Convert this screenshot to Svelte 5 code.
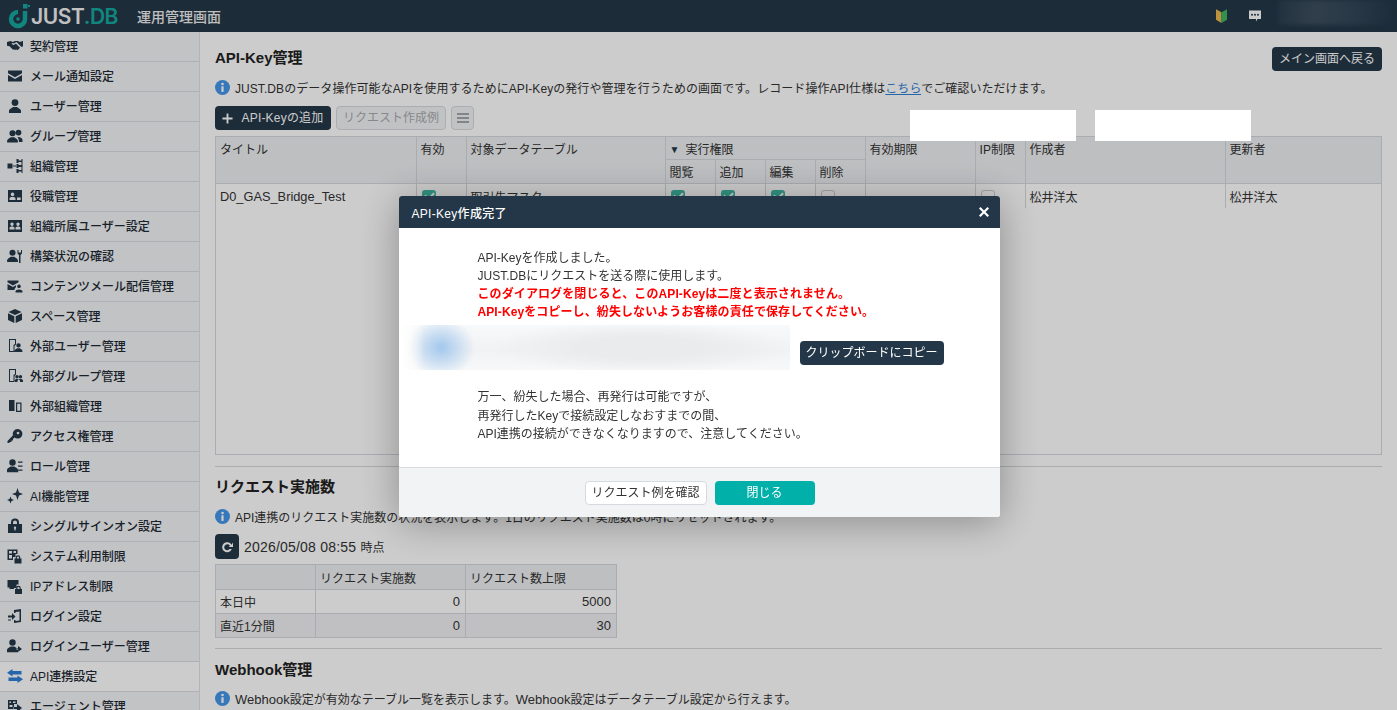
<script>
  const c = (x, y, r) => `M${x - r} ${y}a${r} ${r} 0 1 0 ${2 * r} 0a${r} ${r} 0 1 0 ${-2 * r} 0z`;
  const person = (x, y, s = 1) =>
    c(x, y + 3.6 * s, 3.4 * s) +
    `M${x - 6 * s} ${y + 14 * s}v${-2 * s}c0 ${-2 * s} ${3 * s} ${-3 * s} ${4 * s} ${-4 * s}h${4 * s}c${1 * s} ${1 * s} ${4 * s} ${2 * s} ${4 * s} ${4 * s}v${2 * s}z`;
  const lock = (x, y, s = 1) =>
    `M${x} ${y + 3 * s}h${7 * s}v${5 * s}h${-7 * s}z` + `M${x + 1.2 * s} ${y + 3 * s}v${-1 * s}a${2.3 * s} ${2.3 * s} 0 0 1 ${4.6 * s} 0v${1 * s}h${-1.2 * s}v${-1 * s}a${1.1 * s} ${1.1 * s} 0 0 0 ${-2.2 * s} 0v${1 * s}z`;
  const nav = [
    ['契約管理', 'M0 4l3.500-1 2.500 1 2-1h3l1.500 1 3.500-1v5.500l-1.800.3-1.200-1.300-3.500-3.500-2.500 1.500-1.500-.5-1 1 2 1 2.500-1.300 4 4-2.500 2.500-1.500-1-1 1-1-1-1 .5-3.500-3.500-2.500-.5z'],
    ['メール通知設定', 'M1 2.500h14v2.700L8 9.200 1 5.200zM1 7l7 4 7-4v6.500H1z'],
    ['ユーザー管理', person(8, 1)],
    ['グループ管理', person(5.500, 2, .9) + c(11.500, 4.600, 2.900) + 'M11 9c2 0 4.500 1 4.500 3v2h-3.500c0-2-.5-3.500-1.500-4.500z'],
    ['組織管理', 'M.5 5.500h5v5h-5zM6 7.500h3v1H6zM9.500 1h2v1.500h3V1h1v14h-1v-1.500h-3V15h-2v-4h2v1h3V9h-3v1h-2V6h2v1h3V4h-3v1h-2z'],
    ['役職管理', 'M1 2h14v12H1zM5.500 4.500a1.800 1.800 0 1 0 .01 0zM2.500 12h6V10.500c0-1-1.500-1.800-3-1.800s-3 .8-3 1.800zM10 9.500v2.500h3.700V9.500z'],
    ['組織所属ユーザー設定', 'M1 2h14v12H1zM5 4.500a1.700 1.700 0 1 0 .01 0zM11 4.500a1.700 1.700 0 1 0 .01 0zM2.500 11.500h5V10c0-1-1.200-1.500-2.500-1.500S2.500 9 2.500 10zM8.500 11.500h5V10c0-1-1.200-1.500-2.500-1.500S8.500 9 8.500 10z'],
    ['構築状況の確認', person(5.500, 1.500, .9) + 'M10.500 2h1v2.500h2.500V2h1v3.500L13.500 7v8h-1.500V7l-1.500-1.500z'],
    ['コンテンツメール配信管理', 'M.5 2.500h11v1.800L6 7.500.5 4.300zM.5 6l5.500 3 3-1.700v2c-1 .7-1.500 1.500-1.500 2.700H.5zM12 6.500a1.800 1.800 0 1 0 .01 0zM8.500 14.500h7v-1c0-1.200-1.700-2-3.500-2s-3.500.8-3.500 2z'],
    ['スペース管理', 'M8 1l6.500 3L8 7 1.500 4zM1 5.300l6.300 2.900V15L1 12zM15 5.300L8.700 8.200V15L15 12z'],
    ['外部ユーザー管理', 'M2 1h7v5.500L7.500 8v6H2zM3 2v11h3.500V7L8 6V2z' + person(11.500, 5, .65)],
    ['外部グループ管理', 'M2 1h7v5.500L7.500 8v6H2zM3 2v11h3.500V7L8 6V2z' + person(10, 7, .5) + person(13.500, 7, .5)],
    ['外部組織管理', 'M2 2h5.500v11H2zM9 4.500h5.500V14H9zM10.200 5.700v7.100h3.100V5.700z'],
    ['アクセス権管理', 'M10.500 1a4.800 4.800 0 1 1-3 8.500L6 11v1.500H4.500V14H3l-1 1H.5v-2l5.500-5.800A4.800 4.800 0 0 1 10.500 1zM11 3.700a1.300 1.300 0 1 0 .01 0z'],
    ['ロール管理', person(5.500, 1, .95) + 'M11 3.500h4.500v1.200H11zM11 7.500h4.500v1.200H11zM11 11.500h4.500v1.200H11z'],
    ['AI機能管理', 'M10.500 0l1.500 4.500 4 1.500-4 1.500-1.500 4.500L9 7.500 5 6l4-1.500zM3.500 8.500l1 2.500 2.500 1-2.500 1-1 2.500-1-2.500L0 12l2.500-1z'],
    ['シングルサインオン設定', 'M1 6h14v9H1zM8 8.500a1.300 1.300 0 0 0-.6 2.400v1.600h1.200v-1.600A1.300 1.300 0 0 0 8 8.500zM4 6V4.500a4 4 0 0 1 8 0V6h-2V4.500a2 2 0 0 0-4 0V6z'],
    ['システム利用制限', 'M.5 1.500h10v4.500H8.500v3H6v3H.5zM2 3v2.500h3V3zM6.500 3v2h2.500V3zM2 7v3.500h3V7z' + lock(7.500, 7.500, 1)],
    ['IPアドレス制限', 'M.5 2h11v4.500H9.500v3.500H7v1H2.500v-1.500h2V9.500h-4z' + lock(8, 8, 1)],
    ['ログイン設定', 'M7 2l7-1v13l-7 1v-3h1.500v1l4-.5v-9l-4 .5V5H7zM1 7.500h4V5l3.500 3.500L5 12V9.500H1zM1 11.500h3v1H1z'],
    ['ログインユーザー管理', person(5.500, 1, .95) + 'M11 8v2.300h-1.500v1.400H11V14l4-3z'],
    ['API連携設定', 'M5.500 1v2h9v3.500h-9V8.500L0 4.700zM10.500 7.500v2h-9V13h9v2L16 11.200z', true],
    ['エージェント管理', 'M1 2h9v4H7v5H1zM2.500 3.500v1.500h1.500V3.500zM6 3.500v1.500h2.500V3.500zM2.500 7v2h3V7zM10 6v3H6.500v2H10v3l5-4z']
  ];
  const cols = ['タイトル', '有効', '対象データテーブル'];
</script>

<div class="page">
  <header class="topbar">
    <div class="logo">
      <svg class="logo-mark" viewBox="0 0 22 25" aria-hidden="true"><path d="M10 8A7 7 0 1 0 17 15V7" fill="none" stroke="#16a89e" stroke-width="4.500" /><circle cx="10" cy="15" r="1.800" fill="#16a89e" /><rect x="15" y="0" width="4.500" height="4.500" fill="#16a89e" /><rect x="20" y="1" width="2" height="2" fill="#16a89e" /></svg>
      <span class="logo-text">JUST<span class="logo-dot">.</span><span class="logo-db">DB</span></span>
    </div>
    <span class="app-title">運用管理画面</span>
    <div class="top-right">
      <svg class="beginner" viewBox="0 0 12 15" aria-hidden="true"><path d="M0 0l6 3.500V15L0 11.500z" fill="#e9b84f" /><path d="M12 0L6 3.500V15l6-3.500z" fill="#3fb660" /></svg>
      <svg class="chat" viewBox="0 0 14 14" aria-hidden="true"><path d="M1 1.500h12v8.500H9.500L8 12.500V10H1z" fill="#fff" /><circle cx="4" cy="5.800" r="1" fill="#243748" /><circle cx="7" cy="5.800" r="1" fill="#243748" /><circle cx="10" cy="5.800" r="1" fill="#243748" /></svg>
      <div class="account"></div>
    </div>
  </header>

  <div class="columns">
    <nav class="sidebar">
      {#each nav as [label, d, active]}
        <div class="nav-item" class:active>
          <svg class="nav-icon" viewBox="0 0 16 16" aria-hidden="true"><path {d} fill-rule="evenodd" /></svg>
          <span>{label}</span>
        </div>
      {/each}
    </nav>

    <main class="content">
      <div class="title-row">
        <h2>API-Key管理</h2>
        <button class="btn dark back">メイン画面へ戻る</button>
      </div>
      <p class="info first">
        <svg class="info-icon" viewBox="0 0 16 16" aria-hidden="true"><circle cx="8" cy="8" r="8" /><rect x="6.800" y="6.700" width="2.400" height="6" fill="#fff" /><circle cx="8" cy="4.300" r="1.400" fill="#fff" /></svg>
        <span>JUST.DBのデータ操作可能なAPIを使用するためにAPI-Keyの発行や管理を行うための画面です。レコード操作API仕様は<a href="#top">こちら</a>でご確認いただけます。</span>
      </p>
      <div class="toolbar">
        <button class="btn dark add"><svg viewBox="0 0 12 12" aria-hidden="true"><path d="M5 .5h2V5h4.500v2H7v4.500H5V7H.5V5H5z" fill="#fff" /></svg>API-Keyの追加</button>
        <button class="btn disabled">リクエスト作成例</button>
        <button class="btn disabled menu" aria-label="menu"><svg viewBox="0 0 12 10" aria-hidden="true"><path d="M0 0h12v2H0zM0 4h12v2H0zM0 8h12v2H0z" fill="#a3a6ab" /></svg></button>
      </div>

      <div class="grid-box">
        <table class="keys">
          <colgroup>
            <col style="width:200px" /><col style="width:50px" /><col style="width:199px" />
            <col style="width:50px" /><col style="width:50px" /><col style="width:50px" /><col style="width:50px" />
            <col style="width:110px" /><col style="width:50px" /><col style="width:200px" /><col />
          </colgroup>
          <thead>
            <tr>
              {#each cols as t}<th rowspan="2">{t}</th>{/each}
              <th colspan="4"><span class="tri">▼</span>実行権限</th>
              <th rowspan="2">有効期限</th>
              <th rowspan="2">IP制限</th>
              <th rowspan="2">作成者</th>
              <th rowspan="2" class="last">更新者</th>
            </tr>
            <tr><th>閲覧</th><th>追加</th><th>編集</th><th>削除</th></tr>
          </thead>
          <tbody>
            <tr>
              <td class="latin">D0_GAS_Bridge_Test</td>
              <td><span class="check on"></span></td>
              <td>取引先マスタ</td>
              <td><span class="check on"></span></td>
              <td><span class="check on"></span></td>
              <td><span class="check on"></span></td>
              <td><span class="check"></span></td>
              <td></td>
              <td><span class="check"></span></td>
              <td>松井洋太</td>
              <td class="last">松井洋太</td>
            </tr>
          </tbody>
        </table>
      </div>

      <hr />
      <h2 class="sub">リクエスト実施数</h2>
      <p class="info">
        <svg class="info-icon" viewBox="0 0 16 16" aria-hidden="true"><circle cx="8" cy="8" r="8" /><rect x="6.800" y="6.700" width="2.400" height="6" fill="#fff" /><circle cx="8" cy="4.300" r="1.400" fill="#fff" /></svg>
        <span>API連携のリクエスト実施数の状況を表示します。1日のリクエスト実施数は0時にリセットされます。</span>
      </p>
      <div class="refresh-row">
        <button class="btn dark refresh" aria-label="refresh"><svg viewBox="0 0 12 12" aria-hidden="true"><path d="M10.500 3.800A5 5 0 1 0 10.800 8H8.600A3 3 0 1 1 9 5.100L7.500 6H12V1.500z" fill="#fff" /></svg></button>
        <span><span class="date">2026/05/08 08:55</span> 時点</span>
      </div>
      <table class="usage">
        <colgroup><col style="width:100px" /><col style="width:150px" /><col style="width:151px" /></colgroup>
        <thead><tr><th></th><th>リクエスト実施数</th><th>リクエスト数上限</th></tr></thead>
        <tbody>
          <tr><td>本日中</td><td class="num">0</td><td class="num">5000</td></tr>
          <tr class="stripe"><td>直近1分間</td><td class="num">0</td><td class="num">30</td></tr>
        </tbody>
      </table>
      <hr class="hr2" />
      <h2 class="sub webhook">Webhook管理</h2>
      <p class="info">
        <svg class="info-icon" viewBox="0 0 16 16" aria-hidden="true"><circle cx="8" cy="8" r="8" /><rect x="6.800" y="6.700" width="2.400" height="6" fill="#fff" /><circle cx="8" cy="4.300" r="1.400" fill="#fff" /></svg>
        <span><span class="lat">Webhook</span>設定が有効なテーブル一覧を表示します。<span class="lat">Webhook</span>設定はデータテーブル設定から行えます。</span>
      </p>
    </main>
  </div>

  <div class="overlay">
    <section class="modal">
      <div class="modal-head">
        <span>API-Key作成完了</span>
        <svg viewBox="0 0 10 10" aria-hidden="true"><path d="M1.500 0L5 3.500 8.500 0 10 1.500 6.500 5 10 8.500 8.500 10 5 6.500 1.500 10 0 8.500 3.500 5 0 1.500z" fill="#fff" /></svg>
      </div>
      <div class="modal-body">
        <div class="msg">
          <p>API-Keyを作成しました。</p>
          <p>JUST.DBにリクエストを送る際に使用します。</p>
          <p class="warn">このダイアログを閉じると、このAPI-Keyは二度と表示されません。</p>
          <p class="warn">API-Keyをコピーし、紛失しないようお客様の責任で保存してください。</p>
        </div>
        <div class="key-row">
          <div class="key-blur"></div>
          <button class="btn dark copy">クリップボードにコピー</button>
        </div>
        <div class="msg after">
          <p>万一、紛失した場合、再発行は可能ですが、</p>
          <p>再発行したKeyで接続設定しなおすまでの間、</p>
          <p>API連携の接続ができなくなりますので、注意してください。</p>
        </div>
      </div>
      <div class="modal-foot">
        <button class="btn outline">リクエスト例を確認</button>
        <button class="btn teal">閉じる</button>
      </div>
    </section>
  </div>

  <div class="mask m1"></div>
  <div class="mask m2"></div>
</div>

<style>
  :global(body) {
    margin: 0;
    overflow: hidden;
    background: #fff;
    font-family: "Liberation Sans", "Noto Sans CJK JP", sans-serif;
    font-size: 12px;
    color: #333;
  }
  .page { height: 710px; overflow: hidden; display: flex; flex-direction: column; }
  .topbar {
    flex: none; height: 32px; background: #243748; color: #fff;
    display: flex; align-items: center; padding-left: 8px; box-sizing: border-box;
  }
  .logo { display: flex; align-items: center; width: 129px; }
  .logo-mark { width: 22px; height: 25px; margin-right: 1px; }
  .logo-text { font-family: "Inter", "Liberation Sans", sans-serif; font-size: 21px; font-weight: 600; letter-spacing: -0.45px; color: #f2f2f2; }
  .logo-dot, .logo-db { color: #16a89e; }
  .app-title { font-size: 14px; font-weight: 500; color: #eee; }
  .top-right { margin-left: auto; display: flex; align-items: center; height: 100%; }
  .beginner { width: 11px; height: 14px; margin-right: 21px; }
  .chat { width: 14px; height: 14px; margin-right: 16px; }
  .account { width: 119px; height: 25px; align-self: flex-start; background: linear-gradient(90deg, #2b3f50, #3d4f5e 30%, #34485a 60%, #243748); filter: blur(2px); }

  .columns { flex: 1; display: flex; min-height: 0; }
  .sidebar { flex: none; width: 199px; background: #f2f4f6; border-right: 1px solid #dfe2e6; overflow: hidden; }
  .nav-item {
    height: 30px; box-sizing: border-box; border-bottom: 1px solid #dadde2;
    display: flex; align-items: center; padding: 0 0 2px 7px; color: #1f2a35; font-weight: 500;
  }
  .nav-item span { margin-left: 7px; }
  .nav-item.active { background: #fff; }
  .nav-icon { width: 16px; height: 16px; flex: none; fill: #243748; }
  .nav-item.active .nav-icon { fill: #2f7fd6; }

  .content { flex: 1; min-width: 0; padding: 0 15px; box-sizing: border-box; overflow: hidden; }
  h2 { margin: 0; font-size: 15px; line-height: 20px; font-weight: 700; color: #222; }
  .title-row { display: flex; justify-content: space-between; align-items: flex-start; padding-top: 15px; height: 39px; box-sizing: border-box; }
  .title-row h2 { padding-top: 1px; }
  .btn {
    font: inherit; font-size: 12px; height: 24px; padding: 0; border-radius: 4px; border: 1px solid transparent;
    box-sizing: border-box; display: inline-flex; align-items: center; justify-content: center; line-height: 1;
  }
  .dark { background: #243748; color: #fff; }
  .back { width: 110px; }
  .info { margin: 0; height: 20px; display: flex; align-items: center; gap: 5px; color: #333; white-space: nowrap; }
  .info.first { letter-spacing: .065px; }
  .lat { font-size: 13px; }
  .info-icon { width: 15px; height: 15px; fill: #4596ea; flex: none; }
  .info a { color: #2f7fd6; }
  .title-row + .info { margin-top: 6px; }
  .toolbar { display: flex; gap: 5px; margin-top: 9px; height: 24px; }
  .add { width: 116px; letter-spacing: .2px; }
  .add svg { width: 11px; height: 11px; margin-right: 8px; }
  .disabled { background: #f2f3f5; color: #a8abb0; border-color: #d6d9dd; width: 110px; }
  .menu { width: 23px; }
  .menu svg { width: 12px; height: 10px; }

  .grid-box { margin-top: 6px; width: 1167px; height: 319px; box-sizing: border-box; border: 1px solid #d4d8de; overflow: hidden; }
  table { border-collapse: collapse; table-layout: fixed; }
  .keys { width: 1165px; }
  .keys th, .keys td, .usage th, .usage td { border: 1px solid #d4d8de; padding: 0 4px; font-weight: 400; text-align: left; white-space: nowrap; }
  .keys th { background: #edeff2; height: 22px; vertical-align: middle; }
  .keys thead tr:last-child th { height: 23px; }
  .keys th[rowspan] { vertical-align: top; padding-top: 3px; }
  .keys thead tr:first-child th { border-top: 0; }
  .keys th:first-child, .keys td:first-child { border-left: 0; }
  .keys .last { border-right: 0; }
  .keys td { height: 23px; border-bottom: 0; padding-top: 1px; }
  .latin { font-size: 12.800px; }
  .tri { font-size: 10px; margin-right: 6px; margin-left: 0; vertical-align: 1px; color: #243748; }
  .check { display: block; width: 14px; height: 14px; box-sizing: border-box; border-radius: 3px; border: 1px solid #c8ccd2; background: #fff; margin-left: 1px; }
  .check.on { border: 0; background: #3fb9a2; position: relative; }
  .check.on::after { content: ""; position: absolute; left: 3px; top: 2px; width: 7px; height: 4px; border-left: 2px solid #fff; border-bottom: 2px solid #fff; transform: rotate(-45deg); }

  hr { border: 0; border-top: 1px solid #d8d8d8; margin: 11px 0 0; }
  .sub { margin-top: 10px; }
  .sub + .info { margin-top: 9px; }
  .refresh-row { display: flex; align-items: center; gap: 5px; margin-top: 8px; height: 25px; color: #333; font-size: 12px; }
  .date { font-size: 14px; letter-spacing: .2px; margin-right: 1px; }
  .refresh { width: 24px; height: 25px; }
  .refresh svg { width: 12px; height: 12px; }
  .usage { width: 401px; margin-top: 5px; }
  .usage th { background: #edeff2; height: 25px; box-sizing: border-box; }
  .usage td { height: 24px; box-sizing: border-box; }
  .usage .stripe td { background: #f0f1f3; }
  .usage .num { text-align: right; padding-right: 5px; font-size: 13px; }
  .hr2 { margin-top: 10px; }
  .webhook { margin-top: 11px; }
  .webhook + .info { margin-top: 8px; }

  .overlay {
    position: fixed; inset: 0; background: rgba(0, 0, 0, .2);
    display: flex; align-items: center; justify-content: center; padding: 3px 0 0 1px; box-sizing: border-box;
  }
  .modal { width: 601px; height: 321px; display: flex; flex-direction: column; background: #fff; border-radius: 3px; overflow: hidden; box-shadow: 0 5px 40px rgba(0, 0, 0, .32); }
  .modal-head { flex: none; height: 32px; background: #243748; color: #fff; display: flex; align-items: center; justify-content: space-between; padding: 0 11px 0 13px; font-size: 12px; font-weight: 500; letter-spacing: .3px; }
  .modal-head svg { width: 10px; height: 10px; }
  .modal-body { flex: 1; min-height: 0; padding-top: 21px; color: #333; }
  .msg { padding-left: 79px; }
  .msg p { margin: 0; height: 18px; line-height: 18px; white-space: nowrap; }
  .msg .warn { color: #ff0000; font-weight: 700; letter-spacing: .1px; }
  .key-row { display: flex; align-items: flex-end; gap: 10px; padding-left: 3px; margin-top: 4px; }
  .key-blur {
    width: 388px; height: 45px;
    background:
      radial-gradient(ellipse 34px 30px at 39px 50%, #a9cbee 8%, rgba(174, 205, 238, 0) 100%),
      radial-gradient(ellipse 150px 26px at 240px 50%, #e9ebec 40%, rgba(233, 235, 236, 0) 100%),
      linear-gradient(180deg, #f8f9fa 0, #f1f2f3 55%, #f7f8f9 100%);
    -webkit-mask-image: linear-gradient(90deg, transparent 0, #000 22px);
    mask-image: linear-gradient(90deg, transparent 0, #000 22px);
  }
  .copy { width: 144px; margin-bottom: 5px; }
  .after { margin-top: 18px; }
  .after p { height: 18.500px; line-height: 18.500px; }
  .modal-foot { flex: none; height: 50px; box-sizing: border-box; background: #f1f3f5; border-top: 1px solid #d8dce1; display: flex; align-items: center; justify-content: center; gap: 8px; padding-left: 1px; }
  .outline { width: 122px; background: #fff; color: #333; border-color: #d6dae0; }
  .teal { width: 100px; background: #00b0a9; color: #fff; }

  .mask { position: fixed; top: 110px; height: 31px; background: #fff; }
  .m1 { left: 910px; width: 166px; }
  .m2 { left: 1095px; width: 156px; }
</style>
